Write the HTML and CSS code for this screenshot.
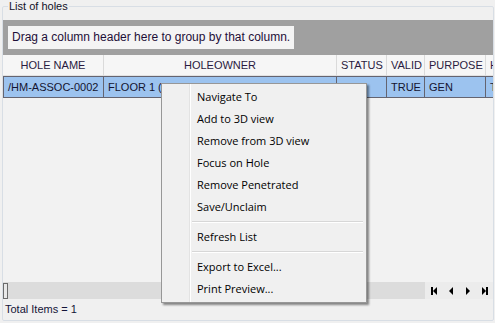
FILE: index.html
```html
<!DOCTYPE html>
<html lang="en">
<head>
  <meta charset="UTF-8" />
  <title>List of holes</title>
  <link rel="stylesheet" href="styles.css">
</head>
<body>

  <fieldset class="holes">
    <legend>List of holes</legend>

    <div class="group-panel">
      <div class="group-hint">Drag a column header here to group by that column.</div>
    </div>

    <div class="grid">
      <div class="grid-head">
        <div class="cell c-name">HOLE NAME</div>
        <div class="cell c-owner">HOLEOWNER</div>
        <div class="cell c-status">STATUS</div>
        <div class="cell c-valid">VALID</div>
        <div class="cell c-purpose">PURPOSE</div>
        <div class="cell c-more">HOLETYPE</div>
      </div>
      <div class="grid-row selected">
        <div class="cell c-name">/HM-ASSOC-0002</div>
        <div class="cell c-owner">FLOOR 1 (1ST FLOOR (PN) LEVEL FLOOR 1)</div>
        <div class="cell c-status"></div>
        <div class="cell c-valid right">TRUE</div>
        <div class="cell c-purpose">GEN</div>
        <div class="cell c-more">T</div>
      </div>
    </div>

    <div class="hscroll">
      <span class="thumb"></span>
      <div class="pager">
        <button class="nav" title="First">
          <svg width="6" height="8" viewBox="0 0 6 8"><rect x="0" y="0" width="2" height="8"/><polygon points="6,0 2,4 6,8"/></svg>
        </button>
        <button class="nav" title="Previous">
          <svg width="4" height="8" viewBox="0 0 4 8"><polygon points="4,0 0,4 4,8"/></svg>
        </button>
        <button class="nav" title="Next">
          <svg width="4" height="8" viewBox="0 0 4 8"><polygon points="0,0 4,4 0,8"/></svg>
        </button>
        <button class="nav" title="Last">
          <svg width="6" height="8" viewBox="0 0 6 8"><polygon points="0,0 4,4 0,8"/><rect x="4" y="0" width="2" height="8"/></svg>
        </button>
      </div>
    </div>

    <div class="status">Total Items = 1</div>
  </fieldset>

  <!-- right-click menu over the grid -->
  <div class="ctx-menu">
    <div class="item">Navigate To</div>
    <div class="item">Add to 3D view</div>
    <div class="item">Remove from 3D view</div>
    <div class="item">Focus on Hole</div>
    <div class="item">Remove Penetrated</div>
    <div class="item">Save/Unclaim</div>
    <div class="sep"></div>
    <div class="item">Refresh List</div>
    <div class="sep"></div>
    <div class="item">Export to Excel...</div>
    <div class="item">Print Preview...</div>
  </div>

</body>
</html>
```

FILE: styles.css
```css
* { box-sizing: border-box; }
body {
  margin: 0;
  width: 495px;
  height: 323px;
  overflow: hidden;
  background: #f0f0f0;
  font-family: 'Liberation Sans', Arial, sans-serif;
  font-size: 11px;
  color: #141430;
}

.holes {
  margin: 0 1px 0 2px;
  padding: 0;
  min-width: 0;
  height: 321px;
  border: 1px solid #d8dee5;
  border-radius: 2px;
}

.holes legend {
  margin-left: 5px;
  padding: 0 1px;
  font-size: 11px;
  line-height: 13px;
  color: #101028;
}

.group-panel {
  margin-top: 7px;
  height: 35px;
  background: #a0a0a0;
  padding: 6px 0 0 5px;
}

.group-hint {
  display: inline-block;
  height: 23px;
  line-height: 23px;
  padding: 0 4px 0 4px;
  background: #f4f4f4;
  font-size: 12px;
  color: #1e0f38;
}

.grid {
  height: 227px;
  background: #f2f2f2;
  overflow: hidden;
}

.grid-head,
.grid-row {
  display: grid;
  grid-template-columns: 101px 233px 50px 38px 61px 40px;
  white-space: nowrap;
}

.grid-head {
  height: 21px;
  background: #f6f6f6;
  color: #2a1a40;
}

.grid-head .cell {
  text-align: center;
  line-height: 21px;
  border-right: 1px solid #dadada;
  border-bottom: 1px solid #e2e2e2;
}

.cell {
  overflow: hidden;
  padding: 0 4px;
}

.grid-row {
  height: 22px;
}

.grid-row .cell {
  line-height: 20px;
  border-top: 1px solid #646470;
  border-bottom: 1px solid #646470;
  border-right: 1px solid #646470;
}

.grid-row .cell:first-child {
  border-left: 1px solid #646470;
}

.grid-row.selected {
  background: #9cc3ef;
}

.cell.right { text-align: right; }

.hscroll {
  height: 17px;
  background: #dcdcdc;
  display: flex;
  align-items: stretch;
  justify-content: space-between;
}

.thumb {
  width: 5px;
  margin: 1px 0 0 0;
  border: 1px solid #6b6b6b;
  background: #e8e8e8;
}

.pager {
  display: flex;
  background: #ececec;
}

.nav {
  width: 17px;
  height: 17px;
  padding: 0;
  border: none;
  background: #ececec;
  display: flex;
  align-items: center;
  justify-content: center;
}

.nav svg { fill: #000; }

.status {
  padding: 4px 0 0 2px;
  font-size: 11px;
  color: #141438;
}

.ctx-menu {
  position: absolute;
  left: 161px;
  top: 83px;
  width: 206px;
  padding: 2px;
  border: 1px solid #979797;
  background:
    linear-gradient(to right, transparent 27px, #e3e3e3 27px, #e3e3e3 28px, #ffffff 28px, #ffffff 29px, transparent 29px),
    #f0f0f0;
  box-shadow: 2px 2px 2px rgba(0, 0, 0, 0.45);
  font-family: 'Open Sans', 'Noto Sans', sans-serif;
  font-size: 11px;
  color: #000;
}

.ctx-menu .item {
  height: 22px;
  line-height: 22px;
  padding-left: 33px;
  white-space: nowrap;
}

.ctx-menu .sep {
  height: 8px;
  margin: 0 1px 0 28px;
  background: linear-gradient(to bottom, transparent 3px, #d7d7d7 3px, #d7d7d7 4px, #ffffff 4px, #ffffff 5px, transparent 5px);
}
```
